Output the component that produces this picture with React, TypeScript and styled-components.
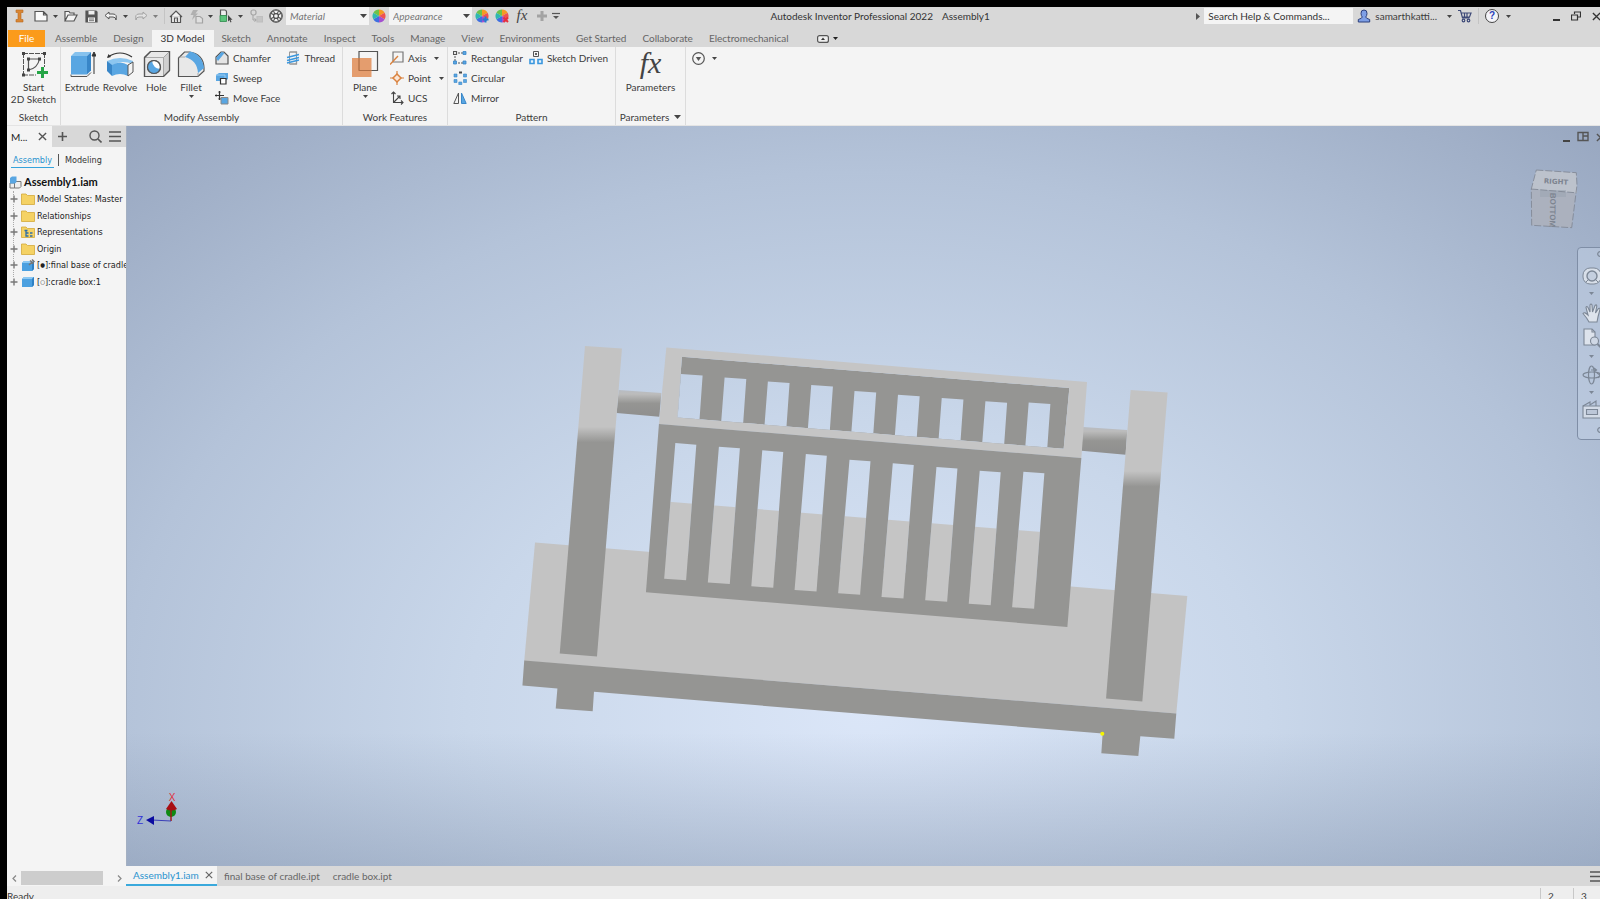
import React from 'react';
import styled, { createGlobalStyle, css } from 'styled-components';

const Global = createGlobalStyle`
  *, *::before, *::after { box-sizing: border-box; }
  html, body { margin: 0; padding: 0; background: #000; overflow: hidden; }
  body { font: 10px/12px Lato, "Open Sans", sans-serif; color: #3c3c3c; }
  button, select, input { font: inherit; color: inherit; margin: 0; padding: 0; border: 0; background: none; border-radius: 0; }
  button { cursor: pointer; }
  svg { display: block; flex: none; }
  ul { list-style: none; margin: 0; padding: 0; }
  h2 { margin: 0; font: inherit; }
  a { color: inherit; text-decoration: none; }
`;

/* ---------- frame ---------- */

const Screen = styled.div`
  height: 100vh;
  padding: 7px 0 0 7px;
  background: #000;
  overflow: hidden;
`;

/* The application window hangs over the right and bottom screen edges. */
const Window = styled.div`
  display: flex;
  flex-direction: column;
  height: calc(100vh + 2px);
  margin-right: -8px;
  background: #f4f4f4;
`;

const Workspace = styled.div`
  flex: 1;
  min-height: 0;
  display: flex;
`;

/* ---------- title bar ---------- */

const TitleBar = styled.header`
  display: flex;
  align-items: center;
  height: 23px;
  padding-bottom: 5px;
  background: #d8d8d8;
`;

const Tool = styled.button<{ $dim?: boolean; $wide?: boolean }>`
  display: flex;
  align-items: center;
  justify-content: center;
  flex: none;
  width: ${p => (p.$wide ? 24 : 20)}px;
  height: 18px;
  opacity: ${p => (p.$dim ? 0.4 : 1)};
`;

const Drop = styled.button<{ $dim?: boolean }>`
  display: flex;
  align-items: center;
  justify-content: center;
  flex: none;
  width: 8px;
  height: 18px;
  margin-right: 2px;
  opacity: ${p => (p.$dim ? 0.6 : 1)};
`;

const Divider = styled.span`
  width: 1px;
  height: 16px;
  margin: 0 1px 0 3px;
  background: #c4c4c4;
`;

const PickerBox = styled.span`
  position: relative;
  flex: none;
  width: 83px;
  height: 18px;
  background: #f4f4f4;
  select {
    appearance: none;
    width: 100%;
    height: 18px;
    padding-left: 4px;
    font-style: italic;
    color: #777;
  }
  svg {
    position: absolute;
    right: 2px;
    top: 7px;
    pointer-events: none;
  }
`;

const Caption = styled.div`
  flex: 1;
  display: flex;
  justify-content: center;
  gap: 9px;
  padding-left: 4px;
  white-space: nowrap;
  color: #333;
`;

const SearchBox = styled.input`
  width: 149px;
  height: 16px;
  padding-left: 4px;
  background: #f4f4f4;
  &::placeholder { color: #333; opacity: 1; }
`;

const Account = styled.button`
  display: flex;
  align-items: center;
  gap: 4px;
  height: 18px;
  padding-left: 4px;
  margin-right: 8px;
`;

const WindowButtons = styled.div`
  display: flex;
  margin-left: 32px;
  padding-right: 2px;
`;

/* ---------- ribbon ---------- */

const TabStrip = styled.nav`
  display: flex;
  height: 17px;
  padding-left: 1px;
  background: #d8d8d8;
`;

const Tab = styled.button<{ $kind?: 'file' | 'active' }>`
  height: 17px;
  padding: 0 8px 1px;
  line-height: 16px;
  white-space: nowrap;
  color: #666;
  ${p => p.$kind === 'file' && css`
    width: 37px;
    margin-right: 2px;
    padding: 0 0 1px;
    background: #fb9b1b;
    color: #fff;
  `}
  ${p => p.$kind === 'active' && css`
    padding: 0 9px 1px;
    background: #f4f4f4;
    color: #333;
  `}
`;

const RibbonToggle = styled.button`
  display: flex;
  align-items: center;
  gap: 4px;
  margin-left: 20px;
`;

const Ribbon = styled.div`
  display: flex;
  height: 79px;
  background: #f4f4f4;
  border-bottom: 1px solid #e4e4e4;
`;

const Group = styled.section<{ $w: number }>`
  display: flex;
  flex-direction: column;
  justify-content: space-between;
  min-width: ${p => p.$w}px;
  padding: 3px 3px 2px 3px;
  border-right: 1px solid #dcdcdc;
`;

const GroupBody = styled.div<{ $center?: boolean }>`
  display: flex;
  ${p => p.$center && 'justify-content: center;'}
`;

const GroupTitle = styled.h2`
  display: flex;
  align-items: center;
  justify-content: center;
  gap: 5px;
  white-space: nowrap;
`;

const BigButton = styled.button<{ $w: number }>`
  display: flex;
  flex-direction: column;
  align-items: center;
  width: ${p => p.$w}px;
  height: 58px;
  line-height: 12px;
  white-space: nowrap;
  > svg:first-child { margin-bottom: 3px; }
  > svg + span + svg { margin-top: 2px; }
`;

const SmallColumn = styled.div`
  display: flex;
  flex-direction: column;
  gap: 4px;
  padding-left: 6px;
  &:first-child { padding-left: 2px; }
`;

const SmallButton = styled.button`
  display: flex;
  align-items: center;
  gap: 4px;
  height: 16px;
  white-space: nowrap;
  > span + svg { margin-left: 4px; }
`;

const RibbonOptions = styled.button`
  display: flex;
  align-items: center;
  align-self: flex-start;
  gap: 7px;
  margin: 5px 0 0 6px;
`;

/* ---------- model browser ---------- */

const Browser = styled.aside`
  display: flex;
  flex-direction: column;
  flex: none;
  width: 119px;
  background: #f4f4f4;
  overflow: hidden;
  color: #222;
`;

const BrowserBar = styled.div`
  display: flex;
  align-items: center;
  height: 21px;
  padding-right: 1px;
  background: #d8d8d8;
`;

const BrowserTab = styled.div`
  display: flex;
  align-items: center;
  justify-content: space-between;
  width: 45px;
  height: 21px;
  padding: 0 5px 0 4px;
  background: #f4f4f4;
`;

const BarSpacer = styled.span`
  flex: 1;
`;

const Modes = styled.div`
  display: flex;
  align-items: center;
  height: 26px;
  padding: 0 4px;
  gap: 4px;
  font: 9px/12px "DejaVu Sans Condensed", sans-serif;
`;

const Mode = styled.button<{ $on?: boolean }>`
  height: 15px;
  padding: 0 2px;
  border-bottom: 1px solid ${p => (p.$on ? '#35a3dc' : 'transparent')};
  color: ${p => (p.$on ? '#2a93cf' : '#333')};
`;

const ModeRule = styled.span`
  width: 1px;
  height: 12px;
  background: #555;
`;

const RootNode = styled.div`
  display: flex;
  align-items: center;
  gap: 2px;
  height: 18px;
  padding-left: 2px;
  font: bold 11px/12px Lato, sans-serif;
  color: #111;
`;

const Tree = styled.ul`
  position: relative;
  display: grid;
  grid-auto-rows: 1fr;
  height: 99px;
  font: 9px/12px "DejaVu Sans Condensed", sans-serif;
  &::before {
    content: '';
    position: absolute;
    left: 6px;
    top: 0;
    bottom: 9px;
    border-left: 1px dotted #aaa;
  }
`;

const TreeRow = styled.li`
  position: relative;
  display: flex;
  align-items: center;
  gap: 2px;
  padding-left: 3px;
  white-space: nowrap;
  button { margin-right: 1px; background: #f4f4f4; }
`;

const Dot = styled.span`
  font-size: 6px;
  vertical-align: 1px;
`;

const ScrollTrack = styled.div`
  display: flex;
  align-items: center;
  gap: 4px;
  height: 14px;
  margin: auto 4px 1px 5px;
`;

const ScrollThumb = styled.span`
  width: 82px;
  height: 14px;
  background: #cdcdcd;
`;

/* ---------- document area ---------- */

const DocArea = styled.main`
  display: flex;
  flex-direction: column;
  flex: 1;
  min-width: 0;
`;

const Viewport = styled.div`
  position: relative;
  flex: 1;
  min-height: 0;
  overflow: hidden;
  background:
    linear-gradient(to bottom, rgba(120, 137, 164, 0) 82%, rgba(120, 137, 164, 0.38) 100%),
    radial-gradient(ellipse 90% 130% at 50% 79%, #dbe6f8 0%, #c9d7ea 30%, #b4c3d9 56%, #98a7c0 82%, #8f9fba 100%);
  border-left: 1px solid #a4b0c2;
`;

const Scene = styled.svg`
  position: absolute;
  inset: 0;
  width: 100%;
  height: 100%;
`;

const DocControls = styled.div`
  position: absolute;
  top: 5px;
  right: 3px;
  display: flex;
  gap: 7px;
`;

const ViewCube = styled.svg`
  position: absolute;
  top: 40px;
  right: 27px;
`;

const Triad = styled.svg`
  position: absolute;
  left: 5px;
  bottom: 32px;
`;

const NavBar = styled.div`
  position: absolute;
  top: 121px;
  right: 2px;
  display: flex;
  flex-direction: column;
  align-items: center;
  width: 29px;
  height: 193px;
  padding: 3px 0;
  border: 1px solid #7f8ea6;
  border-radius: 4px;
  background: rgba(196, 210, 230, 0.5);
  button { display: flex; justify-content: center; width: 27px; }
  > svg { margin-top: 1px; }
`;

const NavRule = styled.span`
  width: 22px;
  height: 1px;
  margin: 3px 0 4px;
  background: #8a99b0;
`;

const NavEnd = styled.button`
  padding: 0 0 2px 16px;
`;

const DocTabs = styled.nav`
  display: flex;
  align-items: center;
  height: 20px;
  background: #d8d8d8;
  color: #666;
`;

const DocTab = styled.a<{ $on?: boolean }>`
  display: flex;
  align-items: center;
  gap: 6px;
  height: 20px;
  padding: 0 6px 0 7px;
  white-space: nowrap;
  ${p => p.$on && css`
    width: 91px;
    padding-bottom: 1px;
    border-bottom: 2px solid #3aa9dc;
    background: #f4f4f4;
    color: #2a93cf;
  `}
`;

const DocMenu = styled.button`
  margin: 0 6px 0 auto;
`;

const StatusBar = styled.footer`
  display: flex;
  justify-content: space-between;
  height: 22px;
  line-height: 20px;
  background: #eeeeee;
`;

const Counts = styled.div`
  display: flex;
  padding-right: 2px;
  span {
    width: 33px;
    padding-left: 7px;
    margin-top: 2px;
    line-height: 16px;
    border-left: 1px solid #c8c8c8;
  }
`;

/* ---------- icons ---------- */

const Arrow = ({ s = 5, c = '#444' }: { s?: number; c?: string }) => (
  <svg width={s} height={s === 7 ? 4 : 3} viewBox="0 0 6 4" preserveAspectRatio="none"><path d="M0 0h6L3 4z" fill={c} /></svg>
);
const Cross = ({ s = 9, c = '#555' }: { s?: number; c?: string }) => (
  <svg width={s} height={s} viewBox="0 0 10 10" stroke={c} strokeWidth="1.5"><path d="M1 1l8 8M9 1L1 9" /></svg>
);
const Bars = () => (
  <svg width="12" height="11" viewBox="0 0 12 11" stroke="#555" strokeWidth="1.6"><path d="M0 1h12M0 5.5h12M0 10h12" /></svg>
);
const Icon = ({ w = 14, h, box, children }: { w?: number; h?: number; box?: string; children: React.ReactNode }) => (
  <svg width={w} height={h ?? w} viewBox={box ?? `0 0 ${w} ${h ?? w}`} fill="none" stroke="#555" strokeWidth="1.2" aria-hidden="true">{children}</svg>
);

const LogoIcon = () => (
  <Icon w={9} h={14}><path d="M1 1h7v2.5H6v7h2V13H1v-2.500h2v-7H1z" fill="#d98634" stroke="#b86a1e" strokeWidth=".6" /></Icon>
);
const NewIcon = () => <Icon w={14} h={12}><path d="M1 1.500h8.500l3.500 3.500v6H1zM9.500 1.500V5H13" fill="#fafafa" /></Icon>;
const OpenIcon = () => <Icon w={14} h={12}><path d="M1 11V1.500h4l1 1.500h4v2M1 11l3-6h9l-3 6z" fill="#f4f4f4" /></Icon>;
const SaveIcon = () => (
  <Icon w={13}><path d="M1 1h10l1 1v10H1z" fill="#555" /><path d="M3.500 1h6v3.500h-6zM3 7.500h7V12H3z" fill="#eee" stroke="none" /><path d="M4 9h5M4 10.700h5" strokeWidth=".8" /></Icon>
);
const UndoIcon = () => <Icon w={14} h={10}><path d="M5 1L1 4.500 5 8V6h4q3 0 3 3 1.500-6-3-6H5z" fill="#f2f2f2" strokeWidth="1" /></Icon>;
const RedoIcon = () => <Icon w={14} h={10}><path d="M9 1l4 3.500L9 8V6H5Q2 6 2 9 .5 3 5 3h4z" fill="#f2f2f2" strokeWidth="1" /></Icon>;
const HomeIcon = () => <Icon w={14} h={13}><path d="M2.500 6v6.500h9V6M1 7l6-6 6 6" fill="#f2f2f2" /><path d="M5.500 12.500V8h3v4.500M7.500 10h.5" /></Icon>;
const BoltIcon = () => <Icon w={15}><path d="M4 1h5L6.500 4.500H9L3 11l1.500-5H1.500z" fill="#777" stroke="none" /><path d="M7 7.500h4l2.500 2V14H7z" fill="#eee" /></Icon>;
const PickIcon = () => (
  <Icon w={14}><path d="M1.500 1h4q2 0 2 2v4h-6z" fill="#eee" /><path d="M1 6.500h6.500v6H1z" fill="#5cc47c" stroke="#2e8c4c" strokeWidth=".8" /><path d="M9 6v6.500l1.500-1.500 1 2.500 1-.5-1-2.300h2z" fill="#444" stroke="none" /></Icon>
);
const ReturnIcon = () => (
  <Icon w={14}><rect x="2" y="1" width="5" height="5" rx="2" /><path d="M4 6v5h3M5.500 9.500L7.500 11l-2 1.500" strokeWidth="1" /><path d="M8 7.500h5.500v5.500H8z" fill="#aaa" stroke="#999" /></Icon>
);
const BallIcon = () => (
  <Icon w={14}><circle cx="7" cy="7" r="6.300" fill="#555" strokeWidth="1" /><g fill="#f2f2f2" stroke="none"><circle cx="7" cy="7" r="1.800" /><path d="M5 1.800h4L8 4H6zM5 12.200h4L8 10H6zM1.800 5v4L4 8V6zM12.200 5v4L10 8V6z" /><path d="M2.700 4l1.500-1.500.8 1.800-.7.700zM11.300 4L9.800 2.500 9 4.300l.7.700zM2.700 10l1.500 1.500.8-1.800-.7-.7zM11.300 10l-1.500 1.500-.8-1.800.7-.7z" /></g></Icon>
);
const WheelIcon = ({ badge }: { badge?: 'add' | 'clear' }) => (
  <Icon w={14}>
    <g stroke="none">
      <path d="M7 7V.5A6.500 6.500 0 0 1 12.600 3.700z" fill="#f59a23" /><path d="M7 7l5.600-3.300a6.500 6.500 0 0 1 0 6.600z" fill="#ef5350" />
      <path d="M7 7l5.600 3.300A6.500 6.500 0 0 1 7 13.500z" fill="#a34fd0" /><path d="M7 7v6.500a6.500 6.500 0 0 1-5.600-3.200z" fill="#3f6fe0" />
      <path d="M7 7l-5.600 3.300a6.500 6.500 0 0 1 0-6.600z" fill="#2fb8b0" /><path d="M7 7L1.400 3.700A6.500 6.500 0 0 1 7 .5z" fill="#6cc24a" />
    </g>
    {badge === 'add' && <path d="M10.500 7.500v6M7.500 10.500h6" stroke="#1f7fd0" strokeWidth="2" />}
    {badge === 'clear' && <path d="M8.500 8.500l4.500 4.500M13 8.500L8.500 13" stroke="#e8303a" strokeWidth="2" />}
  </Icon>
);
const FxText = styled.span<{ $big?: boolean }>`
  font: italic ${p => (p.$big ? '30px/26px' : '15px/14px')} "Liberation Serif", serif;
  height: ${p => (p.$big ? 31 : 16)}px;
  color: #444;
`;
const CustomizeIcon = () => <Icon w={8} h={8}><path d="M0 1.500h8" /><path d="M1 4h6L4 7z" fill="#555" stroke="none" /></Icon>;
const UserIcon = () => <Icon w={14}><path d="M7 1q3.300 0 3 3.500Q9.800 7 8.700 8q0 1.300 4 2.500V13H1.300v-2.500q4-1.200 4-2.500Q4.200 7 4 4.500 3.700 1 7 1z" fill="#7e9fe6" stroke="#2b3f7c" strokeWidth="1" /></Icon>;
const CartIcon = () => <Icon w={14}><path d="M0 1.500h2.500l2 7.500h7M3 4h10l-1.500 4H4.300M6.500 4v4M9 4v4" stroke="#3e4a78" /><circle cx="5.500" cy="11.500" r="1.300" stroke="#3e4a78" /><circle cx="10.500" cy="11.500" r="1.300" stroke="#3e4a78" /></Icon>;
const HelpBadge = styled.span`
  display: block;
  width: 14px;
  height: 14px;
  border: 1px solid #444;
  border-radius: 50%;
  background: #f4f4f8;
  font: bold 10px/12px "Liberation Sans", sans-serif;
  color: #2a3fb8;
`;

const SketchIcon = () => (
  <Icon w={28}>
    <path d="M3 3.500h22M3 25h13M3.500 3v22M24.500 3v14" strokeWidth="1" strokeDasharray="5 1" />
    <path d="M8.500 9h11M8.500 9v11M8.500 20q9-1.500 11-11" />
    <g fill="#444" stroke="none"><path d="M2 2h3v3H2zM23 2h3v3h-3zM2 23.500h3v3H2zM7 7.500h3v3H7zM18 7.500h3v3h-3zM7 18.500h3v3H7z" /></g>
    <path d="M22.500 17v11M17 22.500h11" stroke="#25a546" strokeWidth="3" />
  </Icon>
);
const ExtrudeIcon = () => (
  <Icon w={28}>
    <path d="M3 24.500v2h16l4-4" fill="#eee" strokeWidth="1" /><path d="M3 6h16v18.500H3z" fill="#59a6e2" stroke="none" /><path d="M3 6l4-4h16l-4 4z" fill="#86c2ee" stroke="none" />
    <path d="M19 6l4-4v18.500l-4 4z" fill="#3886c8" stroke="none" /><path d="M26 24V5M24 6l2-4 2 4z" fill="#333" stroke="#333" strokeWidth="1" />
  </Icon>
);
const RevolveIcon = () => (
  <Icon w={28}>
    <path d="M2 7q12-8 24 0" stroke="#333" /><path d="M1 8l1.500-4L5 7z" fill="#333" stroke="none" />
    <path d="M1 11q13-6 26 0v3q-13-5-21 2z" fill="#8cc6f0" stroke="none" /><path d="M1 11l5 4v11l-5-5z" fill="#3886c8" stroke="none" />
    <path d="M6 15q8-5 16 0v11q-8-4-16 0z" fill="#59a6e2" stroke="none" /><path d="M22 15l5-3v10l-5 4z" fill="#f4f4f4" strokeWidth="1" />
  </Icon>
);
const HoleIcon = () => (
  <Icon w={28}>
    <path d="M1.500 7.500l6-6h19v19l-6 6h-19z" fill="#e8e8e8" /><path d="M20.500 7.500l6-6v19l-6 6z" fill="#d0d0d0" stroke="none" /><path d="M1.500 7.500h19v19M20.500 7.500l6-6" stroke="#999" strokeWidth=".8" />
    <path d="M1.500 7.500l6-6h19v19l-6 6h-19z" /><circle cx="11" cy="17" r="6.500" fill="#fff" /><path d="M9 11a6.500 6.500 0 1 0 8 8q-7-1-8-8z" fill="#59a6e2" stroke="none" /><circle cx="11" cy="17" r="6.500" />
  </Icon>
);
const FilletIcon = () => (
  <Icon w={28}>
    <path d="M1.500 26.500V8l6-6h5q14 2 14.500 16v3l-6 5.500z" fill="#e8e8e8" /><path d="M8 7l5-5.500Q25 4 27 18l-6 5Q20 10 8 7z" fill="#59a6e2" stroke="none" /><path d="M21 23v3.500M8 7H1.500" stroke="#999" strokeWidth=".8" />
  </Icon>
);
const ChamferIcon = () => <Icon><path d="M1 13V6l5-5h3l4 4v8z" fill="#e4e4e4" /><path d="M1 7l5.500-6 3 1L3 10z" fill="#59a6e2" stroke="none" /></Icon>;
const SweepIcon = () => <Icon><path d="M1 4l3-2h9v6l-3 2H1z" fill="#59a6e2" stroke="none" /><path d="M1 4h9v6" stroke="#9ccdf2" strokeWidth="1" /><path d="M5.500 7.500h5.500v5.500H5.500z" fill="#fff" stroke="#333" /></Icon>;
const MoveFaceIcon = () => <Icon><path d="M6 6.500h7V13H6z" fill="#59a6e2" stroke="#888" strokeWidth="1" /><path d="M4.500 0v9M0 4.500h9M3.500 1.200h2M3.500 7.800h2M1.200 3.500v2" stroke="#333" /></Icon>;
const ThreadIcon = () => <Icon><path d="M3.500 1h7v3.500M3.500 13h7V9.500" stroke="#666" /><path d="M3.500 1v12M10.500 1v12" stroke="#999" strokeWidth="1" /><path d="M1 6.500l12-3M1 9.500l12-3M1 12l12-3" stroke="#3a97de" strokeWidth="1.500" /></Icon>;
const PlaneIcon = () => <Icon w={28}><path d="M8 1.500h18.500V20.500H8z" /><path d="M1 8h19.500v19H1z" fill="#e08a50" fillOpacity=".82" stroke="none" /><path d="M8 8v12.500h12.500" stroke="#a86a42" strokeWidth=".8" /></Icon>;
const AxisIcon = () => <Icon><path d="M3 1h10v10H3z" stroke="#777" /><path d="M0 13.500L8 5" stroke="#d9823f" strokeWidth="1.400" /></Icon>;
const PointIcon = () => <Icon><path d="M7 3l4 4-4 4-4-4z" fill="#fbe6d6" stroke="#d9823f" strokeWidth="1.500" /><path d="M7 0v3M7 11v3M0 7h3M11 7h3" stroke="#d9823f" /></Icon>;
const UcsIcon = () => <Icon><path d="M3.500 1v10.500H13M3.500 11.500l6-6M1.500 3l2-2 2 2M11 9.500l2 2-2 2M7 5h3v3" stroke="#444" strokeWidth="1.100" /></Icon>;
const RectPatIcon = () => <Icon><path d="M2 5v5M5 2h5M5 12h6" strokeDasharray="2 1" strokeWidth="1" /><path d="M.5.500h3v3h-3z" /><path d="M10 .5h3v3h-3zM.5 10h3v3h-3zM10 10h3v3h-3z" fill="#59a6e2" stroke="#3a87c8" strokeWidth=".8" /></Icon>;
const CircPatIcon = () => <Icon><path d="M6 .5h3v2H6z" fill="#444" stroke="none" /><g fill="#59a6e2" stroke="#3a87c8" strokeWidth=".6"><path d="M1 3h3v3H1zM10.500 3h3v3h-3zM1 8.500h3v3H1zM10.500 8.500h3v3h-3zM5.800 11h3v2.700h-3z" /></g></Icon>;
const MirrorIcon = () => <Icon><path d="M5.500 2v10.500H.800z" strokeWidth="1" /><path d="M8.500 2v10.500h4.700z" fill="#59a6e2" stroke="#3a87c8" strokeWidth="1" /></Icon>;
const SketchPatIcon = () => <Icon><path d="M4.500.500h5v5h-5z" strokeWidth="1" /><path d="M7 2v2M6 3h2" stroke="#333" strokeWidth="1" /><path d="M1 8.500h4v4H1zM9 8.500h4v4H9z" fill="#e6f2fb" stroke="#3a97de" strokeWidth="1.600" /></Icon>;

const AsmIcon = () => <Icon w={13}><path d="M1 7h4.500v5H1zM5.500 7l1-1.500H12v5L10.500 12h-5z" fill="#eee" stroke="#777" strokeWidth="1" /><path d="M1 2l2-1.500h4.500V6L6 7.500H1z" fill="#59a6e2" stroke="none" /></Icon>;
const FolderIcon = ({ rep }: { rep?: boolean }) => (
  <Icon w={14} h={12}><path d="M.5 11.500V1h4.500l1.500 1.500h7v9z" fill="#f5d264" stroke="#d3aa3a" strokeWidth=".8" />{rep && <path d="M5 4v6h2.500M5 7h2.500M9 7h2.500M9 10h2.500M3.500 4.500h3" stroke="#2e6ea8" strokeWidth="1.300" />}</Icon>
);
const PartIcon = ({ pin }: { pin?: boolean }) => (
  <Icon w={14} h={13}><path d="M1 4l2-2h10v8l-2 2H1z" fill="#4ba0e0" stroke="none" /><path d="M1 4l2-2h10l-2 2z" fill="#8cc8f2" stroke="none" /><path d="M11 4l2-2v8l-2 2z" fill="#2f80c4" stroke="none" />{pin && <path d="M8 6l3-3M9 1.500l3.500 3M11 .5l2.500 2.500" stroke="#777" strokeWidth="1.500" />}</Icon>
);
const Expand = ({ name }: { name: string }) => (
  <button aria-label={`Expand ${name}`}><svg width="8" height="8" viewBox="0 0 8 8" stroke="#777" strokeWidth="1.400"><path d="M4 .500v7M.500 4h7" /></svg></button>
);

/* ---------- 3D scene ---------- */

type P = [number, number];
const poly = (pts: P[]) => 'M' + pts.map(([x, y]) => `${x} ${y}`).join('L') + 'Z';

const backSlats: P[] = [[681.300, 374], [725, 377.500], [768.300, 381.500], [811.700, 385], [855, 391], [898.500, 394.800], [942.300, 398], [986, 401.300], [1029.300, 402.500]];
const frontSlats: { top: P; bottom: P }[] = [
  { top: [675.700, 443], bottom: [664.500, 578.700] }, { top: [719.300, 446.700], bottom: [708.200, 582.500] },
  { top: [762.700, 450.300], bottom: [751.700, 586.300] }, { top: [806.300, 454], bottom: [795, 590] },
  { top: [850, 459.700], bottom: [838.600, 593.200] }, { top: [893.300, 463.300], bottom: [882, 597] },
  { top: [937, 467], bottom: [925.700, 600.300] }, { top: [980.300, 470.700], bottom: [969.300, 603.700] },
  { top: [1024, 471.700], bottom: [1012.700, 607.300] },
];

const backHoles = backSlats.map(([x, y]) => poly([[x, y], [x + 21.700, y + 1.500], [x + 18, y + 54], [x - 4, y + 52]])).join('');
const frontHoles = frontSlats.map(({ top: [a, b], bottom: [c, d] }) => poly([[a, b], [a + 21, b + 1.600], [c + 22, d + 1.600], [c, d]])).join('');

const LIGHT = '#c3c3c3';
const DARK = '#959593';

const Cradle = () => (
  <Scene viewBox="127 126 1482 740" preserveAspectRatio="xMidYMid meet" role="img" aria-label="Cradle assembly">
    <defs>
      <linearGradient id="post" x1="0" y1="0" x2="0" y2="1">
        <stop offset="0" stopColor={LIGHT} /><stop offset=".26" stopColor={LIGHT} /><stop offset=".31" stopColor={DARK} /><stop offset="1" stopColor={DARK} />
      </linearGradient>
      <linearGradient id="rod" x1="0" y1="0" x2="0" y2="1">
        <stop offset="0" stopColor="#b8bcc2" /><stop offset=".15" stopColor="#bcbcbc" /><stop offset=".5" stopColor={DARK} /><stop offset="1" stopColor="#8f8f8e" />
      </linearGradient>
      <clipPath id="gaps"><path d={frontHoles} /></clipPath>
      <clipPath id="inner"><path d={poly([[682.300, 356.700], [1070, 388], [1064.300, 448.700], [677.700, 417.500]])} /></clipPath>
    </defs>
    <path fill={LIGHT} d={poly([[535.300, 542.500], [1188, 596], [1177, 713.700], [524.500, 661]])} />
    <path fill={DARK} d={poly([[524.500, 660.700], [1177, 713.700], [1175, 739], [1141, 736.300], [1139, 756.300], [1102, 753.300], [1103.300, 733.700], [594.300, 692], [593, 711.300], [556, 708.700], [557.700, 688.700], [522.700, 685.700]])} />
    <path fill="url(#rod)" d={poly([[619, 390], [661.700, 393], [659.700, 416.700], [617, 413]])} />
    <path fill="url(#rod)" d={poly([[1083.700, 427], [1128, 430], [1126.300, 454.700], [1082, 450.700]])} />
    <path fill="url(#post)" d={poly([[585.300, 346], [622.300, 348.500], [597.300, 656.700], [560, 653.700]])} />
    <path fill="url(#post)" d={poly([[1131.300, 390], [1168.300, 392.500], [1143, 701.700], [1106.700, 698.700]])} />
    <path fill="#c5c5c5" fillRule="evenodd" d={poly([[666.700, 347.300], [1087.700, 382], [1082, 458], [659.300, 424]]) + poly([[682.300, 356.700], [1070, 388], [1064.300, 448.700], [677.700, 417.500]])} />
    <path clipPath="url(#inner)" fill={DARK} fillRule="evenodd" d={poly([[682.300, 356.700], [1070, 388], [1064.300, 448.700], [677.700, 417.500]]) + backHoles} />
    <path clipPath="url(#gaps)" fill="#c5c5c5" d={poly([[640, 499.500], [1060, 533.500], [1060, 640], [640, 640]])} />
    <path fill={DARK} fillRule="evenodd" d={poly([[659.300, 424], [1082, 458], [1068, 627], [646.300, 592.300]]) + frontHoles} />
    <circle cx="1103" cy="734" r="2" fill="#f4f400" />
  </Scene>
);

const NAV = '#7c8796';

/* ---------- app ---------- */

const tabs = ['Assemble', 'Design', '3D Model', 'Sketch', 'Annotate', 'Inspect', 'Tools', 'Manage', 'View', 'Environments', 'Get Started', 'Collaborate', 'Electromechanical'];

const nodes: { label: string; mark?: string; icon: React.ReactNode }[] = [
  { label: 'Model States: Master', icon: <FolderIcon /> },
  { label: 'Relationships', icon: <FolderIcon /> },
  { label: 'Representations', icon: <FolderIcon rep /> },
  { label: 'Origin', icon: <FolderIcon /> },
  { label: 'final base of cradle:1', mark: '●', icon: <PartIcon pin /> },
  { label: 'cradle box:1', mark: '○', icon: <PartIcon /> },
];

const Small = ({ icon, label, drop }: { icon: React.ReactNode; label: string; drop?: boolean }) => (
  <SmallButton>{icon}<span>{label}</span>{drop && <Arrow />}</SmallButton>
);

const Picker = ({ label }: { label: string }) => (
  <PickerBox><select aria-label={label}><option>{label}</option></select><Arrow s={7} /></PickerBox>
);

export default function App() {
  return (
    <Screen>
      <Global />
      <Window>
        <TitleBar>
          <Tool $wide aria-label="Inventor"><LogoIcon /></Tool>
          <Tool aria-label="New"><NewIcon /></Tool><Drop aria-label="New options"><Arrow /></Drop>
          <Tool aria-label="Open"><OpenIcon /></Tool>
          <Tool aria-label="Save"><SaveIcon /></Tool>
          <Tool aria-label="Undo"><UndoIcon /></Tool><Drop aria-label="Undo history"><Arrow /></Drop>
          <Tool $dim aria-label="Redo"><RedoIcon /></Tool><Drop $dim aria-label="Redo history"><Arrow /></Drop>
          <Divider />
          <Tool aria-label="Home"><HomeIcon /></Tool>
          <Tool $dim aria-label="Update"><BoltIcon /></Tool><Drop aria-label="Update options"><Arrow /></Drop>
          <Tool aria-label="Select"><PickIcon /></Tool><Drop aria-label="Select options"><Arrow /></Drop>
          <Tool $dim aria-label="Return"><ReturnIcon /></Tool>
          <Tool aria-label="Material browser"><BallIcon /></Tool>
          <Picker label="Material" />
          <Tool aria-label="Appearance browser"><WheelIcon /></Tool>
          <Picker label="Appearance" />
          <Tool aria-label="Adjust"><WheelIcon badge="add" /></Tool>
          <Tool aria-label="Clear"><WheelIcon badge="clear" /></Tool>
          <Tool aria-label="Parameters"><FxText>fx</FxText></Tool>
          <Tool $dim aria-label="Add"><svg width="10" height="10" viewBox="0 0 10 10" stroke="#555" strokeWidth="3"><path d="M5 0v10M0 5h10" /></svg></Tool>
          <Drop aria-label="Customize"><CustomizeIcon /></Drop>
          <Caption><span>Autodesk Inventor Professional 2022</span><span>Assembly1</span></Caption>
          <Drop aria-label="Collapse search"><svg width="4" height="7" viewBox="0 0 4 7"><path d="M0 0v7l4-3.500z" fill="#555" /></svg></Drop>
          <SearchBox aria-label="Search" placeholder="Search Help &amp; Commands..." />
          <Account><UserIcon /><span>samarthkatti...</span></Account>
          <Drop aria-label="Account menu"><Arrow /></Drop>
          <Tool aria-label="Store"><CartIcon /></Tool>
          <Divider />
          <Tool $wide aria-label="Help"><HelpBadge>?</HelpBadge></Tool><Drop aria-label="Help menu"><Arrow /></Drop>
          <WindowButtons>
            <Tool aria-label="Minimize"><svg width="7" height="10" viewBox="0 0 7 10"><path d="M0 8h7v2H0z" fill="#333" /></svg></Tool>
            <Tool aria-label="Restore"><Icon w={10}><path d="M3.500 3V1H9.500v5H7M.500 4h6v5h-6z" stroke="#333" /></Icon></Tool>
            <Tool aria-label="Close"><Cross c="#333" /></Tool>
          </WindowButtons>
        </TitleBar>

        <TabStrip>
          <Tab $kind="file">File</Tab>
          {tabs.map(t => <Tab key={t} $kind={t === '3D Model' ? 'active' : undefined}>{t}</Tab>)}
          <RibbonToggle aria-label="Minimize ribbon">
            <Icon w={12} h={8}><rect x=".6" y=".6" width="10.800" height="6.800" rx="2" fill="#eee" /><path d="M4 5h4L6 2.500z" fill="#333" stroke="none" /></Icon>
            <Arrow c="#222" />
          </RibbonToggle>
        </TabStrip>

        <Ribbon>
          <Group $w={54}>
            <GroupBody $center><BigButton $w={46}><SketchIcon /><span>Start<br />2D Sketch</span></BigButton></GroupBody>
            <GroupTitle>Sketch</GroupTitle>
          </Group>
          <Group $w={282}>
            <GroupBody>
              <BigButton $w={36}><ExtrudeIcon /><span>Extrude</span></BigButton>
              <BigButton $w={40}><RevolveIcon /><span>Revolve</span></BigButton>
              <BigButton $w={33}><HoleIcon /><span>Hole</span></BigButton>
              <BigButton $w={36}><FilletIcon /><span>Fillet</span><Arrow /></BigButton>
              <SmallColumn>
                <Small icon={<ChamferIcon />} label="Chamfer" />
                <Small icon={<SweepIcon />} label="Sweep" />
                <Small icon={<MoveFaceIcon />} label="Move Face" />
              </SmallColumn>
              <SmallColumn><Small icon={<ThreadIcon />} label="Thread" /></SmallColumn>
            </GroupBody>
            <GroupTitle>Modify Assembly</GroupTitle>
          </Group>
          <Group $w={105}>
            <GroupBody>
              <BigButton $w={38}><PlaneIcon /><span>Plane</span><Arrow /></BigButton>
              <SmallColumn>
                <Small icon={<AxisIcon />} label="Axis" drop />
                <Small icon={<PointIcon />} label="Point" drop />
                <Small icon={<UcsIcon />} label="UCS" />
              </SmallColumn>
            </GroupBody>
            <GroupTitle>Work Features</GroupTitle>
          </Group>
          <Group $w={168}>
            <GroupBody>
              <SmallColumn>
                <Small icon={<RectPatIcon />} label="Rectangular" />
                <Small icon={<CircPatIcon />} label="Circular" />
                <Small icon={<MirrorIcon />} label="Mirror" />
              </SmallColumn>
              <SmallColumn><Small icon={<SketchPatIcon />} label="Sketch Driven" /></SmallColumn>
            </GroupBody>
            <GroupTitle>Pattern</GroupTitle>
          </Group>
          <Group $w={70}>
            <GroupBody $center><BigButton $w={56}><FxText $big>fx</FxText><span>Parameters</span></BigButton></GroupBody>
            <GroupTitle>Parameters<Arrow s={7} /></GroupTitle>
          </Group>
          <RibbonOptions aria-label="Ribbon options">
            <Icon w={13}><circle cx="6.500" cy="6.500" r="5.800" /><path d="M3.800 5h5.400L6.500 9z" fill="#555" stroke="none" /></Icon><Arrow />
          </RibbonOptions>
        </Ribbon>

        <Workspace>
          <Browser>
            <BrowserBar>
              <BrowserTab><span>M...</span><button aria-label="Close panel"><Cross /></button></BrowserTab>
              <Tool aria-label="Add panel"><svg width="9" height="9" viewBox="0 0 9 9" stroke="#555" strokeWidth="1.600"><path d="M4.500 0v9M0 4.500h9" /></svg></Tool>
              <BarSpacer />
              <Tool aria-label="Find"><Icon w={13}><circle cx="5.500" cy="5.500" r="4.500" strokeWidth="1.400" /><path d="M9 9l3.500 3.500" strokeWidth="1.600" /></Icon></Tool>
              <Tool aria-label="Panel menu"><Bars /></Tool>
            </BrowserBar>
            <Modes><Mode $on>Assembly</Mode><ModeRule /><Mode>Modeling</Mode></Modes>
            <RootNode><AsmIcon />Assembly1.iam</RootNode>
            <Tree>
              {nodes.map(n => (
                <TreeRow key={n.label}>
                  <Expand name={n.label} />{n.icon}
                  <span>{n.mark && <>[<Dot>{n.mark}</Dot>]:</>}{n.label}</span>
                </TreeRow>
              ))}
            </Tree>
            <ScrollTrack>
              <button aria-label="Scroll left"><Icon w={5} h={7}><path d="M4 .500L1 3.500l3 3" stroke="#888" /></Icon></button>
              <ScrollThumb />
              <BarSpacer />
              <button aria-label="Scroll right"><Icon w={5} h={7}><path d="M1 .500l3 3-3 3" stroke="#888" /></Icon></button>
            </ScrollTrack>
          </Browser>

          <DocArea>
            <Viewport>
              <Cradle />
              <DocControls>
                <button aria-label="Minimize document"><svg width="7" height="12" viewBox="0 0 7 12"><path d="M0 9h7v2H0z" fill="#444" /></svg></button>
                <button aria-label="Tile documents"><Icon w={12}><path d="M1 1.500h10v8H1zM6 1.500v8M6 5h5" strokeWidth="1.400" /></Icon></button>
                <button aria-label="Close document"><Cross /></button>
              </DocControls>
              <ViewCube width="52" height="66" viewBox="1530 166 52 66" aria-label="View cube">
                <path d="M1537.300 170L1577.300 172.700 1578 193 1532.300 189z" fill="#bcc2cc" />
                <path d="M1532.300 189L1576.500 193 1572.700 227.700 1532.700 225.300z" fill="#abb1be" />
                <path d="M1541 190h26v7h-26z" fill="#9da5b3" opacity=".6" />
                <path d="M1537.300 170L1577.300 172.700 1578 185 1572.700 227.700 1532.700 225.300 1532.300 189zM1532.300 189L1576 192.700" fill="none" stroke="#7d8490" strokeWidth=".8" strokeDasharray="7 2" />
                <text x="1557" y="184" textAnchor="middle" fontFamily="DejaVu Sans" fontWeight="bold" fontSize="7" fill="#7d8490" transform="rotate(3 1557 181)">RIGHT</text>
                <text x="1555" y="212" textAnchor="middle" fontFamily="Liberation Sans" fontSize="8" fontWeight="bold" fill="#7d8490" transform="rotate(91 1554 209)">BOTTOM</text>
              </ViewCube>
              <NavBar>
                <NavEnd aria-label="Close navigation bar"><Icon w={6}><circle cx="3" cy="3" r="2.300" stroke={NAV} /></Icon></NavEnd>
                <button aria-label="Steering wheel"><svg width="20" height="32" viewBox="0 0 20 32" fill="none" stroke={NAV}><rect x="1" y="9" width="18" height="16" rx="7" fill="#d8dfe9" /><circle cx="10" cy="17" r="5" fill="#c4cfdf" strokeWidth="1.400" /><path d="M6 21l-2 2M14 21l2 2" /></svg></button>
                <Arrow c={NAV} />
                <NavRule />
                <button aria-label="Pan"><svg width="20" height="22" viewBox="0 0 20 22" fill="#dde3ec" stroke={NAV} strokeWidth="1.100"><path d="M7 20q-2-4-6-8.500Q2.500 9.500 6 13L4 5.500q.5-2 2 0L8 10V3q1-2 2 0l.5 7L13 3.500q1.500-1.500 1.800.500L13.500 11l3-4.500q1.800-.800 1.500 1Q16 14 15 20z" /></svg></button>
                <button aria-label="Zoom"><svg width="20" height="30" viewBox="0 0 20 30" stroke={NAV} strokeWidth="1.100"><path d="M2 5h8l3 3v13H2z" fill="#dde3ec" /><path d="M10 5v3h3" fill="none" /><circle cx="12.500" cy="17" r="4" fill="#cfd8e5" /><path d="M15.500 20l4 4" strokeWidth="2" /></svg></button>
                <Arrow c={NAV} />
                <button aria-label="Orbit"><svg width="20" height="32" viewBox="0 0 20 32" fill="none" stroke={NAV} strokeWidth="1.200"><ellipse cx="9.500" cy="17" rx="3" ry="9" /><ellipse cx="10" cy="17" rx="9" ry="3" /><path d="M9 12h5M12 10l2.500 2L12 14M15 15l3 2-2 3" /></svg></button>
                <Arrow c={NAV} />
                <button aria-label="Look at"><svg width="20" height="30" viewBox="0 0 20 30" fill="#d3dbe7" stroke={NAV} strokeWidth="1.100"><path d="M1 12h19v12H1z" /><path d="M1 12l7-4v3l6-4v5" fill="none" /><path d="M4.500 15.500h11v5h-11z" fill="#bcc7d8" /></svg></button>
                <NavEnd aria-label="Navigation bar options"><Icon w={6} h={10}><circle cx="3" cy="6" r="2.300" stroke={NAV} /></Icon></NavEnd>
              </NavBar>
              <Triad width="50" height="46" viewBox="132 788 50 46" aria-label="Axis triad">
                <circle cx="171" cy="812" r="5" fill="#0f8a12" />
                <path d="M171 821V806" stroke="#a01818" strokeWidth="1.500" />
                <path d="M171 821L152 820" stroke="#3a3fb8" />
                <path d="M166 809L171.500 801 177 809q-5 3-11 0z" fill="#a80d12" />
                <path d="M146 820l8-4v9z" fill="#0b0ba0" />
                <text x="172" y="801" textAnchor="middle" fontFamily="Liberation Sans" fontSize="10" fill="#e03040">X</text>
                <text x="140" y="824" textAnchor="middle" fontFamily="Liberation Sans" fontSize="10" fill="#3030d8">Z</text>
              </Triad>
            </Viewport>
            <DocTabs>
              <DocTab $on href="#assembly1">Assembly1.iam<Cross s={8} c="#666" /></DocTab>
              <DocTab href="#final-base">final base of cradle.ipt</DocTab>
              <DocTab href="#cradle-box">cradle box.ipt</DocTab>
              <DocMenu aria-label="Document list"><Bars /></DocMenu>
            </DocTabs>
          </DocArea>
        </Workspace>

        <StatusBar><span>Ready</span><Counts><span>2</span><span>3</span></Counts></StatusBar>
      </Window>
    </Screen>
  );
}
